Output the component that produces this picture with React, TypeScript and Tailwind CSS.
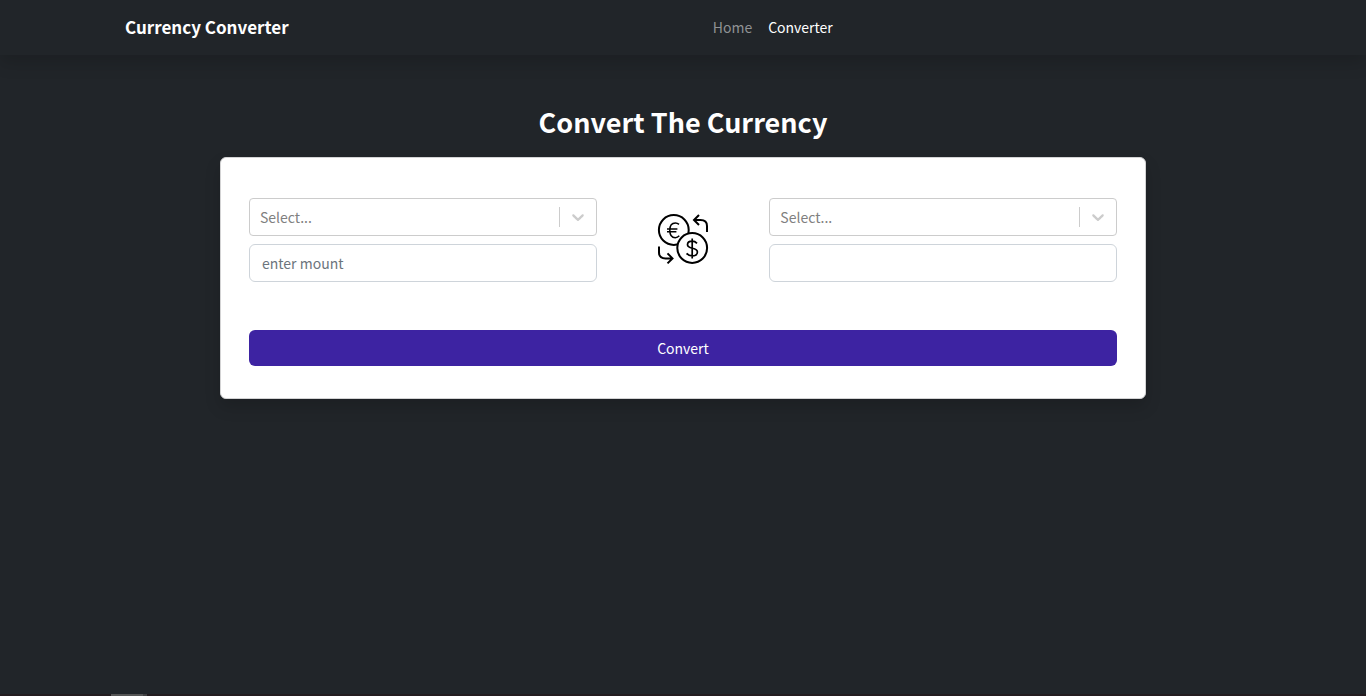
import React from "react";

function Chevron() {
  return (
    <svg className="size-5" viewBox="0 0 20 20" fill="#cccccc" aria-hidden="true">
      <path d="M4.516 7.548c0.436-0.446 1.043-0.481 1.576 0l3.908 3.747 3.908-3.747c0.533-0.481 1.141-0.446 1.574 0 0.436 0.445 0.408 1.197 0 1.615-0.406 0.418-4.695 4.502-4.695 4.502-0.217 0.223-0.502 0.335-0.787 0.335s-0.57-0.112-0.789-0.335c0 0-4.287-4.084-4.695-4.502s-0.436-1.17 0-1.615z" />
    </svg>
  );
}

function CurrencySelect({ label }: { label: string }) {
  return (
    <div className="relative">
      <select
        aria-label={label}
        defaultValue=""
        className="block h-[38px] w-full appearance-none rounded border border-[#cccccc] bg-white pr-12 pl-2.5 text-[#808080]"
      >
        <option value="">Select...</option>
        <option>USD</option>
        <option>EUR</option>
      </select>
      <div className="pointer-events-none absolute inset-y-px right-px flex items-stretch">
        <span className="my-2 w-px bg-[#cccccc]" />
        <span className="flex items-center p-2">
          <Chevron />
        </span>
      </div>
    </div>
  );
}

function AmountInput({ label, placeholder }: { label: string; placeholder?: string }) {
  return (
    <input
      type="text"
      aria-label={label}
      placeholder={placeholder}
      className="block h-[38px] w-full rounded-md border border-[#ced4da] bg-white px-3 text-[#212529] placeholder:text-[#6c757d]"
    />
  );
}

function ExchangeIcon() {
  return (
    <svg
      className="size-[52px]"
      viewBox="0 0 52 52"
      fill="none"
      stroke="#000"
      strokeWidth="2"
      aria-hidden="true"
    >
      <circle cx="16.8" cy="16" r="14.9" />
      <path d="M22 10.4C20.9 9.4 19.8 9 18.4 9C15 9 12.8 11.8 12.8 16.2C12.8 20.8 14.9 23.7 18.3 23.7C20 23.7 21.2 23 22.3 21.8M10 14.9H20.4M10 17.8H19.4" strokeWidth="1.5" />
      <circle cx="35.2" cy="34" r="14.9" fill="#fff" />
      <path d="M40 29.3C38.7 27.9 37.2 27.1 35.2 27.1C32.4 27.1 30.5 28.6 30.5 30.7C30.5 35.3 40.4 33.2 40.4 37.9C40.4 40.4 38.3 41.9 35.2 41.9C32.9 41.9 31 41 29.6 39.4M35.2 24.5V44.5" strokeWidth="1.7" />
      <path d="M42 1L37 6L42 11M37 6H43.5C47.8 6 50 8.4 50 12V18" />
      <path d="M10.5 39.4L15.5 44.4L10.5 49.4M15.5 44.4H8.5C4.2 44.4 2 42 2 38.4V32.4" />
    </svg>
  );
}

export default function App() {
  return (
    <div className="flex min-h-screen flex-col bg-[#212529] font-['Noto_Sans_CJK_SC','Noto_Sans',sans-serif] text-sm text-white">
      <header className="bg-[#212529] shadow-[0_8px_16px_rgba(0,0,0,0.15)]">
        <nav className="mx-auto flex h-[55px] max-w-[1140px] items-center px-3 pb-0.5">
          <a href="#" className="mr-4 text-[17px]/6 font-bold">
            Currency Converter
          </a>
          <div className="mx-auto flex">
            <a href="#home" className="px-2 text-[#909294]">
              Home
            </a>
            <a href="#converter" className="px-2">
              Converter
            </a>
          </div>
        </nav>
      </header>

      <main className="mx-auto w-full max-w-[950px] flex-1 px-3 pt-12">
        <h1 className="mb-4 text-center text-[27px]/[38px] font-bold">
          Convert The Currency
        </h1>
        <form className="rounded-md border border-[#d3d3d4] bg-white px-7 pt-10 pb-8 shadow-[0_8px_16px_rgba(0,0,0,0.15)]">
          <div className="mb-12 grid grid-cols-12 items-center gap-x-6">
            <div className="col-span-5 flex flex-col gap-2">
              <CurrencySelect label="From currency" />
              <AmountInput label="Amount" placeholder="enter mount" />
            </div>
            <div className="col-span-2 flex justify-center">
              <ExchangeIcon />
            </div>
            <div className="col-span-5 flex flex-col gap-2">
              <CurrencySelect label="To currency" />
              <AmountInput label="Converted amount" />
            </div>
          </div>
          <button type="button" className="block h-9 w-full rounded-md bg-[#3d23a2] text-white">
            Convert
          </button>
        </form>
      </main>

      <footer className="flex h-0.5 bg-[#231c1f] pl-[111px]">
        <span className="w-8 bg-[#555555]" />
        <span className="w-1 bg-[#3f3f41]" />
      </footer>
    </div>
  );
}
